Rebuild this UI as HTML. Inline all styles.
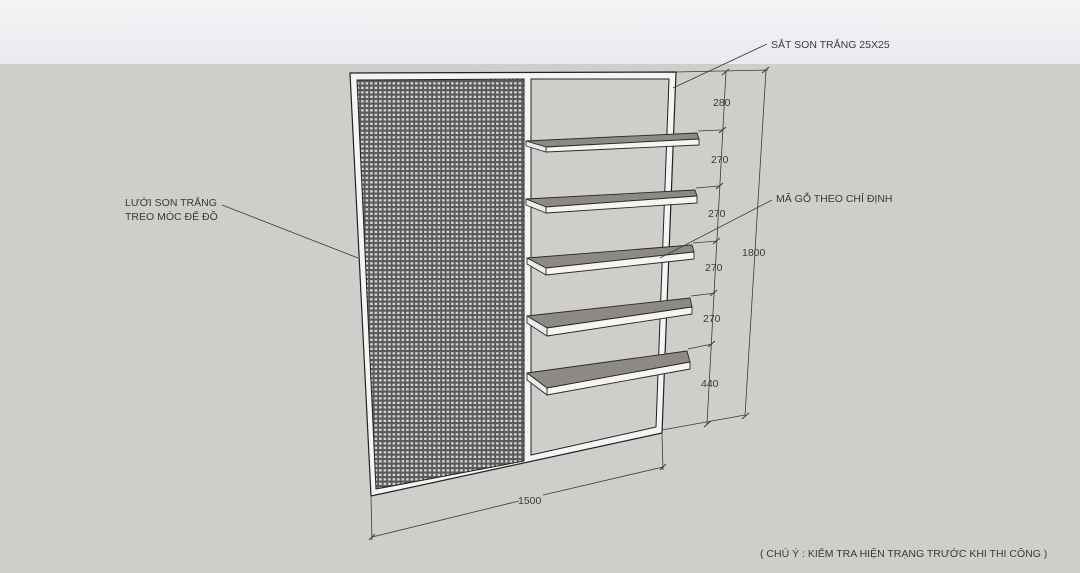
<!DOCTYPE html>
<html><head><meta charset="utf-8"><style>
html,body{margin:0;padding:0;width:1080px;height:573px;overflow:hidden;background:#cdcdca}
svg{display:block}
text{font-family:"Liberation Sans","DejaVu Sans",sans-serif;font-size:10.5px;fill:#3a3a3a}
</style></head><body>
<svg width="1080" height="573" viewBox="0 0 1080 573" xmlns="http://www.w3.org/2000/svg">
<defs>
<linearGradient id="sky" x1="0" y1="0" x2="0" y2="1">
<stop offset="0" stop-color="#f4f5f7"/><stop offset="1" stop-color="#e8eaed"/>
</linearGradient>
<pattern id="mesh" width="4.5" height="4.5" patternUnits="userSpaceOnUse">
<rect width="4.5" height="4.5" fill="#5a5a5a"/>
<rect x="1.1" y="1.2" width="2.6" height="2.3" fill="#d4d4d4"/>
</pattern>
</defs>
<rect x="0" y="0" width="1080" height="64" fill="url(#sky)"/>
<rect x="0" y="64" width="1080" height="509" fill="#cececb"/>

<polygon points="350,73 676,72 662,433 371,496" fill="#f4f4f4" stroke="#222" stroke-width="1.2"/>
<polygon points="357,80 524,79 524,461 376,489" fill="url(#mesh)" stroke="#222" stroke-width="1"/>
<polygon points="531,79 669,79 656,427 531,455" fill="#cececb" stroke="#222" stroke-width="1"/>

<g stroke="#2a2a2a" stroke-width="0.9" stroke-linejoin="round">
<polygon points="526,141 697,133 699,139 546,147" fill="#8e8984"/>
<polygon points="546,147 699,139 699,145 546,152" fill="#f5f5f3"/>
<polygon points="526,141 546,147 546,152 526,146" fill="#ececea"/>

<polygon points="526,199 695,190 697,196 546,207" fill="#8e8984"/>
<polygon points="546,207 697,196 697,203 546,213" fill="#f5f5f3"/>
<polygon points="526,199 546,207 546,213 526,205" fill="#ececea"/>

<polygon points="527,258 692,245 694,252 546,268" fill="#8e8984"/>
<polygon points="546,268 694,252 694,259 546,275" fill="#f5f5f3"/>
<polygon points="527,258 546,268 546,275 527,264" fill="#ececea"/>

<polygon points="527,316 690,298 692,307 547,328" fill="#8e8984"/>
<polygon points="547,328 692,307 692,314 547,336" fill="#f5f5f3"/>
<polygon points="527,316 547,328 547,336 527,323" fill="#ececea"/>

<polygon points="527,373 687,351 690,362 547,388" fill="#8e8984"/>
<polygon points="547,388 690,362 690,369 547,395" fill="#f5f5f3"/>
<polygon points="527,373 547,388 547,395 527,380" fill="#ececea"/>
</g>

<g stroke="#3a3a3a" stroke-width="0.8" fill="none">
<line x1="676" y1="72" x2="768" y2="70"/>
<line x1="726" y1="72" x2="707" y2="424"/>
<line x1="766" y1="70" x2="745" y2="416"/>
<line x1="662" y1="430" x2="745" y2="415"/>
<line x1="698" y1="131" x2="722" y2="130"/>
<line x1="696" y1="188" x2="719" y2="186"/>
<line x1="693" y1="243" x2="717" y2="241"/>
<line x1="691" y1="296" x2="715" y2="293"/>
<line x1="688" y1="349" x2="712" y2="344"/>
<line x1="371" y1="497" x2="372" y2="540"/>
<line x1="662" y1="434" x2="663" y2="470"/>
<line x1="372" y1="537" x2="519" y2="501"/>
<line x1="543" y1="495" x2="663" y2="467"/>
<line x1="673" y1="88" x2="767" y2="44"/>
<line x1="660" y1="258" x2="772" y2="200"/>
<line x1="222" y1="205" x2="358" y2="258"/>
</g>
<g stroke="#3a3a3a" stroke-width="1">
<line x1="722" y1="75" x2="729" y2="69"/>
<line x1="719" y1="133" x2="726" y2="127"/>
<line x1="716" y1="189" x2="723" y2="183"/>
<line x1="713" y1="244" x2="720" y2="238"/>
<line x1="710" y1="296" x2="717" y2="290"/>
<line x1="708" y1="347" x2="715" y2="341"/>
<line x1="704" y1="427" x2="711" y2="421"/>
<line x1="762" y1="73" x2="769" y2="67"/>
<line x1="742" y1="419" x2="749" y2="413"/>
<line x1="369" y1="540" x2="375" y2="534"/>
<line x1="660" y1="470" x2="666" y2="464"/>
</g>

<text x="713" y="106">280</text>
<text x="711" y="163">270</text>
<text x="708" y="217">270</text>
<text x="705" y="271">270</text>
<text x="703" y="322">270</text>
<text x="701" y="387">440</text>
<text x="742" y="256">1800</text>
<text x="518" y="504">1500</text>
<text x="771" y="48">SẮT SON TRẮNG 25X25</text>
<text x="776" y="202">MÃ GỖ THEO CHỈ ĐỊNH</text>
<text x="125" y="206">LƯỚI SON TRẮNG</text>
<text x="125" y="220">TREO MÓC ĐỂ ĐỒ</text>
<text x="760" y="557">( CHÚ Ý : KIỂM TRA HIỆN TRẠNG TRƯỚC KHI THI CÔNG )</text>
</svg>
</body></html>
